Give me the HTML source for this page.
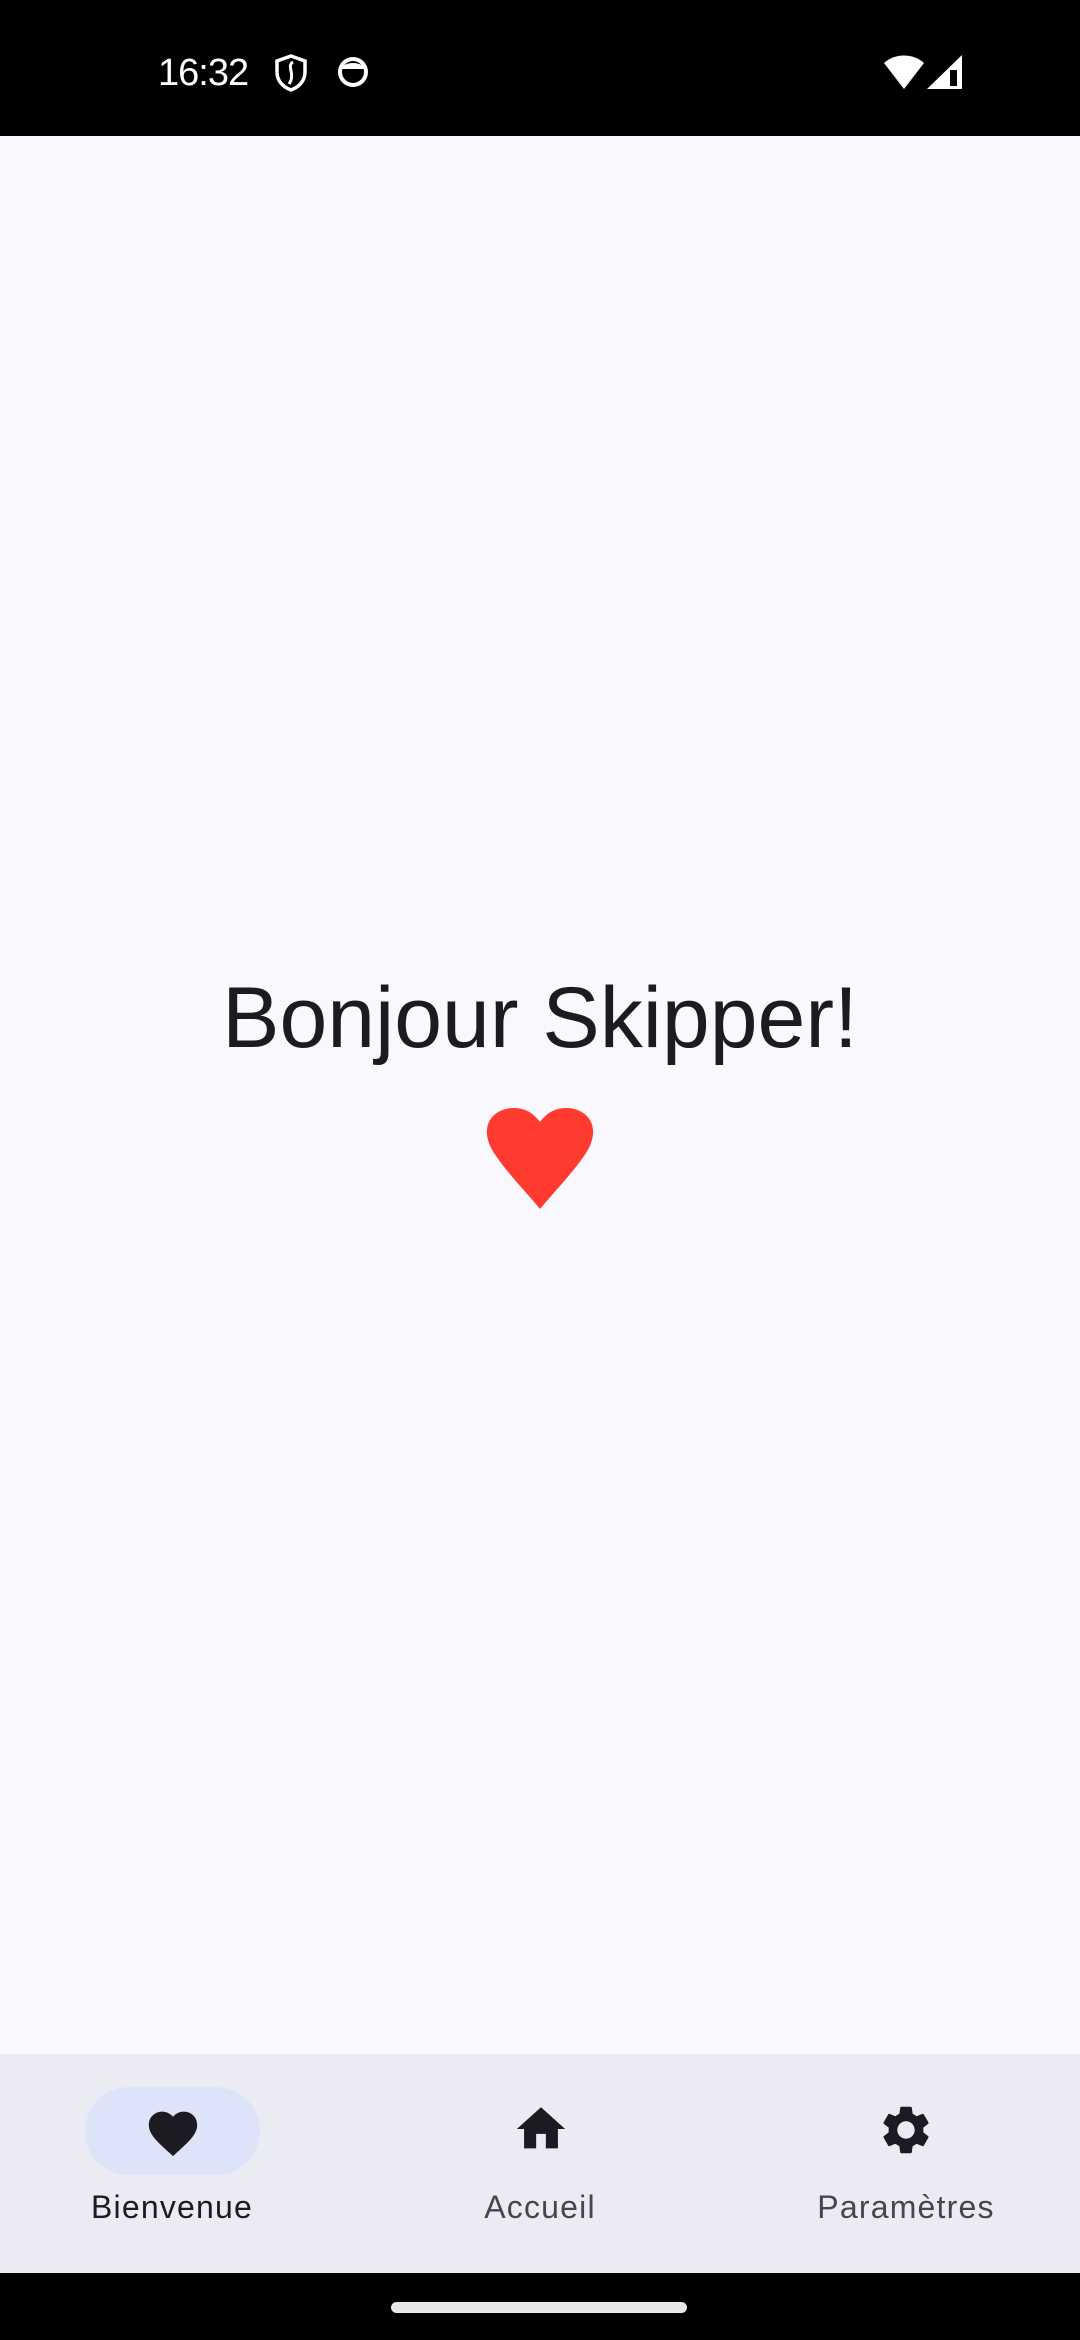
<!DOCTYPE html>
<html><head><meta charset="utf-8"><style>
*{margin:0;padding:0;box-sizing:border-box}
body{width:1080px;height:2340px;background:#f8f8fe;position:relative;overflow:hidden;font-family:"Liberation Sans",sans-serif}
.sb{position:absolute;left:0;top:0;width:1080px;height:136px;background:#000}
.time{position:absolute;left:158px;top:52px;color:#fff;font-size:38px;letter-spacing:-1px}
.title{position:absolute;left:0;width:1080px;top:968px;text-align:center;font-size:86px;color:#1b1b21;line-height:100px}
.nav{position:absolute;left:0;top:2054px;width:1080px;height:219px;background:#ebebf4}
.pill{position:absolute;left:85px;top:2087px;width:175px;height:88px;border-radius:44px;background:#dde3f8}
.lbl{position:absolute;top:2189px;font-size:32px;letter-spacing:1.2px;text-align:center;width:300px;color:#45464f}
.bot{position:absolute;left:0;top:2273px;width:1080px;height:67px;background:#000}
.hb{position:absolute;left:391px;top:2302px;width:296px;height:11px;border-radius:6px;background:#e8e8e8}
</style></head><body>
<div class="sb">
<div class="time">16:32</div>
<svg style="position:absolute;left:274px;top:54px" width="34" height="38" viewBox="0 0 34 38"><path d="M17 2 L31 7 V18 C31 27 25 33 17 36 C9 33 3 27 3 18 V7 Z" fill="none" stroke="#fff" stroke-width="3.5"/><path d="M19 8 C12 12 22 20 15 30" fill="none" stroke="#fff" stroke-width="3"/></svg>
<svg style="position:absolute;left:335px;top:54px" width="36" height="36" viewBox="0 0 36 36"><circle cx="18" cy="18" r="15" fill="#fff"/><circle cx="18" cy="18" r="11" fill="#000"/><path d="M6 15 C9 7 27 7 30 15 Z" fill="#fff"/></svg>
<svg style="position:absolute;left:882px;top:54px" width="44" height="36" viewBox="0 0 44 36"><path d="M22 35 L2 9 C13 -1 31 -1 42 9 Z" fill="#fff"/></svg>
<svg style="position:absolute;left:926px;top:54px" width="38" height="36" viewBox="0 0 38 36"><path d="M36 1 V35 H1 Z" fill="#fff"/><rect x="24" y="16" width="7" height="16" fill="#000"/></svg>
</div>
<div class="title">Bonjour Skipper!</div>
<svg style="position:absolute;left:484px;top:1108px" width="112" height="102" viewBox="0 0 112 102"><path d="M56 101 C42 84 26 68 12 48 C-8 20 8 0 30 0 C42 0 50 6 56 14 C62 6 70 0 82 0 C104 0 120 20 100 48 C86 68 70 84 56 101 Z" fill="#ff3b30"/></svg>
<div class="nav"></div>
<div class="pill"></div>
<svg style="position:absolute;left:144px;top:2104px" width="58" height="54" viewBox="0 0 24 22"><path d="M12 21.4 L10.5 20 C5.4 15.4 2 12.3 2 8.5 C2 5.4 4.4 3 7.5 3 C9.2 3 10.9 3.8 12 5.1 C13.1 3.8 14.8 3 16.5 3 C19.6 3 22 5.4 22 8.5 C22 12.3 18.6 15.4 13.5 20 Z" fill="#1b1b21"/></svg>
<svg style="position:absolute;left:512px;top:2100px" width="58" height="58" viewBox="0 0 24 24"><path d="M10 20v-6h4v6h5v-8h3L12 3 2 12h3v8z" fill="#1b1b21"/></svg>
<svg style="position:absolute;left:877px;top:2101px" width="58" height="58" viewBox="0 0 24 24"><path d="M19.14 12.94c.04-.3.06-.61.06-.94 0-.32-.02-.64-.07-.94l2.03-1.58c.18-.14.23-.41.12-.61l-1.920-3.32c-.12-.22-.37-.29-.59-.22l-2.39.96c-.5-.38-1.03-.7-1.62-.94l-.36-2.540c-.04-.24-.24-.41-.48-.41h-3.84c-.24 0-.43.17-.47.41l-.36 2.54c-.59.24-1.13.57-1.62.94l-2.39-.96c-.22-.08-.47 0-.59.22L2.74 8.87c-.12.21-.08.47.12.61l2.03 1.58c-.05.3-.09.63-.09.94s.02.64.07.94l-2.03 1.58c-.18.14-.23.41-.12.61l1.92 3.32c.12.22.37.29.59.22l2.39-.96c.5.38 1.03.7 1.62.94l.36 2.54c.05.24.24.41.48.41h3.84c.24 0 .44-.17.47-.41l.36-2.54c.59-.24 1.13-.56 1.62-.94l2.39.96c.22.08.47 0 .59-.22l1.92-3.32c.12-.22.07-.47-.12-.61l-2.01-1.58zM12 15.6c-1.98 0-3.6-1.62-3.6-3.6s1.62-3.6 3.6-3.6 3.6 1.62 3.6 3.6-1.62 3.6-3.6 3.6z" fill="#1b1b21"/></svg>
<div class="lbl" style="left:22px;color:#1b1b21">Bienvenue</div>
<div class="lbl" style="left:390px">Accueil</div>
<div class="lbl" style="left:756px">Paramètres</div>
<div class="bot"></div>
<div class="hb"></div>
</body></html>
